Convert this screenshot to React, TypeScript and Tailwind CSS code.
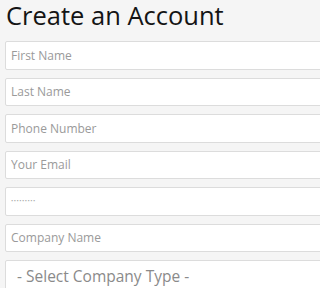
const fields = [
  { placeholder: "First Name", type: "text" },
  { placeholder: "Last Name", type: "text" },
  { placeholder: "Phone Number", type: "tel" },
  { placeholder: "Your Email", type: "email" },
  { placeholder: "Password", type: "password", value: "123456789" },
  { placeholder: "Company Name", type: "text" },
];

export default function App() {
  return (
    <div className="h-[288px] w-full overflow-hidden bg-[#f5f5f5] pl-[5px] font-['Open_Sans',sans-serif]">
      <h1 className="pl-[1px] pt-[2px] text-[25.5px] leading-[26px] text-[#141414]">
        Create an Account
      </h1>
      <form className="mt-[13px] flex flex-col gap-[8px]">
        {fields.map((f) => (
          <input
            key={f.placeholder}
            type={f.type}
            placeholder={f.placeholder}
            defaultValue={f.value}
            className={`h-[28.5px] w-[calc(100%+8px)] rounded-[2px] border border-[#dcdcdc] bg-white px-[5px] text-[#aaa] placeholder:text-[#9a9a9a] outline-none ${
              f.type === "password" ? "text-[6px] tracking-[0.5px]" : "text-[12px]"
            }`}
          />
        ))}
        <div className="h-[40px] w-[calc(100%+8px)] rounded-[2px] border border-[#dcdcdc] bg-white px-[11px] pt-[5px] text-[15.5px] leading-[20px] text-[#8a8a8a]">
          - Select Company Type -
        </div>
      </form>
    </div>
  );
}
